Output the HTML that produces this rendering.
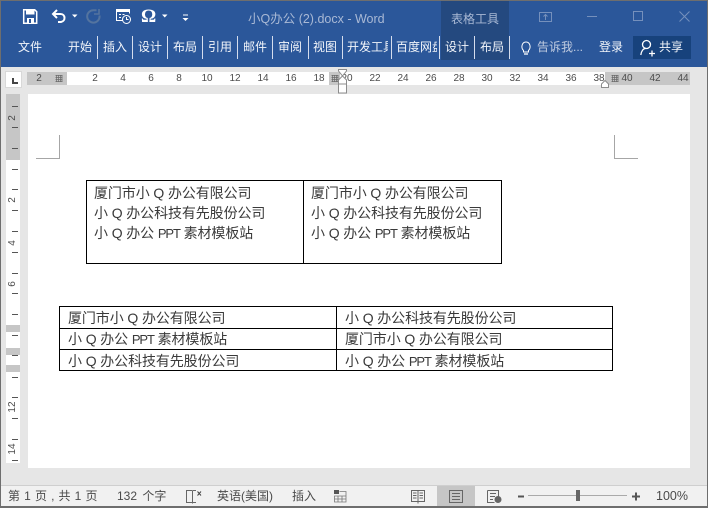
<!DOCTYPE html>
<html lang="zh-CN">
<head>
<meta charset="utf-8">
<style>
html,body{margin:0;padding:0}
body{width:708px;height:508px;overflow:hidden;position:relative;background:#e6e6e6;font-family:"Liberation Sans","Noto Sans CJK SC",sans-serif}
.a{position:absolute;white-space:pre}
.r{position:absolute}
.tab{position:absolute;top:39px;height:16px;line-height:16px;font-size:12px;color:#f2f5fa;white-space:pre;overflow:hidden}
.sep{position:absolute;top:36px;width:1px;height:23px;background:#d5dded}
.hn{position:absolute;top:72px;width:20px;margin-left:-10px;text-align:center;font-size:10px;line-height:13px;color:#4c4c4c}
.vn{position:absolute;left:3px;width:20px;height:12px;text-align:center;font-size:10px;line-height:12px;color:#4c4c4c;transform:rotate(-90deg)}
.t{position:absolute;width:6px;height:1px;left:12px;background:#555}
.d{position:absolute;font-size:14px;line-height:20px;color:#3a3a3a;white-space:pre;letter-spacing:-.1px}
.d span{font-size:13px;letter-spacing:-1.1px}
.s{position:absolute;top:488px;font-size:12px;line-height:16px;color:#4a4a4a;white-space:pre}
svg{position:absolute;overflow:visible}
</style>
</head>
<body>
<!-- ribbon -->
<div class="r" style="left:0;top:0;width:708px;height:67px;background:#2b579a"></div>
<div class="r" style="left:441px;top:1px;width:68px;height:59px;background:#24497f"></div>
<div class="r" style="left:0;top:0;width:708px;height:1px;background:#6e6e6e"></div>

<!-- QAT -->
<svg style="left:0;top:0" width="200" height="30" fill="none">
<path d="M23.700 9.700h11l2 2v11.600h-13z" stroke="#fff" stroke-width="1.500"/>
<path d="M26 9.500h8.500v5H26z" fill="#fff"/>
<path d="M27 18h7v5h-7z" fill="#fff"/><path d="M29 19h2v4h-2z" fill="#2b579a"/>
<path d="M57 10l-4 4 4 4M53.500 14h7c5 0 5.500 7 .5 8h-3" stroke="#fff" stroke-width="2"/>
<path d="M72 14.500h5.500l-2.750 3z" fill="#fff"/>
<path d="M99.500 15.500a6.200 6.200 0 1 1-6-5.300h3" stroke="#54749f" stroke-width="2"/>
<path d="M99 9v5h-5" stroke="#54749f" stroke-width="1.600"/>
<path d="M116 9h14v3h-14z" fill="#fff"/>
<path d="M116.500 9.500h13v4M116.500 9.500v11h6" stroke="#fff"/>
<path d="M119 14.500h2m1.500 0h2M119 17.500h2m1.500 0h2" stroke="#fff"/>
<circle cx="126.500" cy="19.500" r="4" stroke="#fff" fill="#2b579a"/>
<path d="M126.500 17v2.500h2" stroke="#fff"/>
<path d="M162 14.500h5.500l-2.750 3z" fill="#fff"/>
<path d="M183 15h5" stroke="#fff"/><path d="M182.500 18h6l-3 3z" fill="#fff"/>
</svg>
<div class="a" style="left:141px;top:6px;font-family:'Liberation Serif',serif;font-size:19px;line-height:22px;color:#fff;font-weight:bold">Ω</div>

<!-- title -->
<div class="a" style="left:248px;top:11px;font-size:12.500px;line-height:17px;color:#a9b9d5">小Q办公 (2).docx - Word</div>
<div class="a" style="left:451px;top:11px;font-size:12px;line-height:17px;color:#a9b9d5">表格工具</div>

<!-- window controls -->
<svg style="left:530px;top:5px" width="170" height="24" fill="none" stroke="#7590bc">
<path d="M9.500 7.500h12v9h-12z"/><path d="M15.500 15v-5M13.500 11.500l2-2 2 2"/>
<path d="M57 11.500h10"/>
<path d="M103.500 6.500h9v9h-9z"/>
<path d="M149.500 6.500l10 10M159.500 6.500l-10 10"/>
</svg>

<!-- tabs -->
<div class="tab" style="left:18px">文件</div>
<div class="tab" style="left:68px">开始</div><div class="sep" style="left:97px"></div>
<div class="tab" style="left:103px">插入</div><div class="sep" style="left:132px"></div>
<div class="tab" style="left:138px">设计</div><div class="sep" style="left:167px"></div>
<div class="tab" style="left:173px">布局</div><div class="sep" style="left:202px"></div>
<div class="tab" style="left:208px">引用</div><div class="sep" style="left:237px"></div>
<div class="tab" style="left:243px">邮件</div><div class="sep" style="left:272px"></div>
<div class="tab" style="left:278px">审阅</div><div class="sep" style="left:308px"></div>
<div class="tab" style="left:313px">视图</div><div class="sep" style="left:342px"></div>
<div class="tab" style="left:347px;width:41px">开发工具</div><div class="sep" style="left:391px"></div>
<div class="tab" style="left:396px;width:41px">百度网盘</div><div class="sep" style="left:439px"></div>
<div class="tab" style="left:445px">设计</div><div class="sep" style="left:474px"></div>
<div class="tab" style="left:480px">布局</div><div class="sep" style="left:509px"></div>
<svg style="left:520px;top:40px" width="14" height="16" fill="none" stroke="#fff">
<path d="M3.500 10.500c-3-3-1.500-8.500 2.500-8.500s5.500 5.500 2.500 8.500v1.500h-5z"/><path d="M4 14h4" stroke-width="1.300"/>
</svg>
<div class="tab" style="left:537px;color:#c0cce0">告诉我...</div>
<div class="tab" style="left:599px">登录</div>
<div class="r" style="left:633px;top:36px;width:58px;height:23px;background:#17427c"></div>
<svg style="left:640px;top:39px" width="16" height="18" fill="none" stroke="#fff" stroke-width="1.300">
<circle cx="6.500" cy="5.500" r="4"/><path d="M.8 16c.5-4 2.500-6.500 5-6.700M9 14.500h6M12 11.500v6"/>
</svg>
<div class="tab" style="left:659px">共享</div>

<!-- ruler corner -->
<div class="r" style="left:5px;top:71px;width:17px;height:17px;background:#fff;border:1px solid #d8d8d8;box-sizing:border-box"></div>
<div class="r" style="left:12px;top:78px;width:2px;height:6px;background:#444"></div>
<div class="r" style="left:12px;top:82px;width:6px;height:2px;background:#444"></div>

<!-- horizontal ruler -->
<div class="r" style="left:27px;top:72px;width:663px;height:13px;background:#fff"></div>
<div class="r" style="left:27px;top:72px;width:40px;height:13px;background:#c6c6c6"></div>
<div class="r" style="left:329px;top:72px;width:11px;height:13px;background:#c6c6c6"></div>
<div class="r" style="left:605px;top:72px;width:85px;height:13px;background:#c6c6c6"></div>
<div class="hn" style="left:39px">2</div>
<div class="hn" style="left:95px">2</div><div class="hn" style="left:123px">4</div><div class="hn" style="left:151px">6</div><div class="hn" style="left:179px">8</div>
<div class="hn" style="left:207px">10</div><div class="hn" style="left:235px">12</div><div class="hn" style="left:263px">14</div><div class="hn" style="left:291px">16</div><div class="hn" style="left:319px">18</div>
<div class="hn" style="left:347px">20</div><div class="hn" style="left:375px">22</div><div class="hn" style="left:403px">24</div><div class="hn" style="left:431px">26</div><div class="hn" style="left:459px">28</div>
<div class="hn" style="left:487px">30</div><div class="hn" style="left:515px">32</div><div class="hn" style="left:543px">34</div><div class="hn" style="left:571px">36</div><div class="hn" style="left:599px">38</div>
<div class="hn" style="left:627px">40</div><div class="hn" style="left:655px">42</div><div class="hn" style="left:683px">44</div>
<svg style="left:0;top:0" width="708" height="100" fill="none">
<path d="M55.500 75.500h7M55.500 77.500h7M55.500 79.500h7M55.500 81.500h7M56.500 75v7M58.500 75v7M60.500 75v7M62 75v7" stroke="#6a6a6a" stroke-width=".7"/>
<path d="M331.500 75.500h7M331.500 77.500h7M331.500 79.500h7M331.500 81.500h7M332.500 75v7M334.500 75v7M336.500 75v7M338 75v7" stroke="#6a6a6a" stroke-width=".7"/>
<path d="M611.500 75.500h7M611.500 77.500h7M611.500 79.500h7M611.500 81.500h7M612.500 75v7M614.500 75v7M616.500 75v7M618 75v7" stroke="#6a6a6a" stroke-width=".7"/>
<path d="M338.500 69.500h8v1.500l-4 5 4 4v4h-8v-4l4-4-4-5zM338.500 84h8v9h-8z" fill="#fff" stroke="#8c8c8c"/>
<path d="M601.500 87.500v-3.500l3.500-3.500 3.500 3.500v3.500z" fill="#fff" stroke="#8c8c8c"/>
</svg>

<!-- vertical ruler -->
<div class="r" style="left:6px;top:94px;width:14px;height:369px;background:#fff"></div>
<div class="r" style="left:6px;top:94px;width:14px;height:66px;background:#c6c6c6"></div>
<div class="r" style="left:6px;top:325px;width:14px;height:7px;background:#c6c6c6"></div>
<div class="r" style="left:6px;top:348px;width:14px;height:7px;background:#c6c6c6"></div>
<div class="r" style="left:6px;top:365px;width:14px;height:7px;background:#c6c6c6"></div>
<div class="t" style="top:106px"></div><div class="t" style="top:127px"></div><div class="t" style="top:148px"></div><div class="t" style="top:169px"></div><div class="t" style="top:189px"></div><div class="t" style="top:210px"></div><div class="t" style="top:231px"></div><div class="t" style="top:252px"></div><div class="t" style="top:273px"></div><div class="t" style="top:293px"></div><div class="t" style="top:314px"></div><div class="t" style="top:335px"></div><div class="t" style="top:355px"></div><div class="t" style="top:377px"></div><div class="t" style="top:397px"></div><div class="t" style="top:418px"></div><div class="t" style="top:439px"></div><div class="t" style="top:460px"></div>
<div class="vn" style="top:112px">2</div>
<div class="vn" style="top:194px">2</div>
<div class="vn" style="top:237px">4</div>
<div class="vn" style="top:278px">6</div>
<div class="vn" style="top:401px">12</div>
<div class="vn" style="top:443px">14</div>

<!-- page -->
<div class="r" style="left:28px;top:94px;width:662px;height:374px;background:#fff"></div>
<svg style="left:0;top:0" width="708" height="200" fill="none" stroke="#a6a6a6">
<path d="M36 158.500h23.500V135M614.500 135v23.500H638"/>
</svg>

<!-- table 1 -->
<div class="r" style="left:86px;top:180px;width:416px;height:84px;border:1px solid #000;box-sizing:border-box"></div>
<div class="r" style="left:303px;top:180px;width:1px;height:84px;background:#000"></div>
<div class="d" style="left:94px;top:183px">厦门市小 Q 办公有限公司</div>
<div class="d" style="left:94px;top:203px">小 Q 办公科技有先股份公司</div>
<div class="d" style="left:94px;top:223px">小 Q 办公 <span>PPT</span> 素材模板站</div>
<div class="d" style="left:311px;top:183px">厦门市小 Q 办公有限公司</div>
<div class="d" style="left:311px;top:203px">小 Q 办公科技有先股份公司</div>
<div class="d" style="left:311px;top:223px">小 Q 办公 <span>PPT</span> 素材模板站</div>

<!-- table 2 -->
<div class="r" style="left:59px;top:306px;width:554px;height:65px;border:1px solid #000;box-sizing:border-box"></div>
<div class="r" style="left:59px;top:328px;width:554px;height:1px;background:#000"></div>
<div class="r" style="left:59px;top:349px;width:554px;height:1px;background:#000"></div>
<div class="r" style="left:336px;top:306px;width:1px;height:65px;background:#000"></div>
<div class="d" style="left:68px;top:308px">厦门市小 Q 办公有限公司</div>
<div class="d" style="left:68px;top:329px">小 Q 办公 <span>PPT</span> 素材模板站</div>
<div class="d" style="left:68px;top:351px">小 Q 办公科技有先股份公司</div>
<div class="d" style="left:345px;top:308px">小 Q 办公科技有先股份公司</div>
<div class="d" style="left:345px;top:329px">厦门市小 Q 办公有限公司</div>
<div class="d" style="left:345px;top:351px">小 Q 办公 <span>PPT</span> 素材模板站</div>

<!-- status bar -->
<div class="r" style="left:0;top:485px;width:708px;height:1px;background:#cfcfcf"></div>
<div class="r" style="left:0;top:486px;width:708px;height:20px;background:#f1f1f1"></div>
<div class="r" style="left:437px;top:486px;width:38px;height:20px;background:#c6c6c6"></div>
<div class="s" style="left:8px;word-spacing:.8px">第 1 页 , 共 1 页</div>
<div class="s" style="left:117px;word-spacing:2px">132 个字</div>
<div class="s" style="left:217px">英语(美国)</div>
<div class="s" style="left:292px">插入</div>
<div class="s" style="left:656px;font-size:12.500px">100%</div>
<svg style="left:0;top:0" width="708" height="508" fill="none" stroke="#666">
<path d="M192.500 490.500h-6v12h6M192.500 490.500v13M193 490.500h3M193 502.500h3"/>
<path d="M197.500 491.500l3.500 4M201 491.500l-3.500 4" stroke="#444"/>
<path d="M334 490h5v4h-5z" fill="#555" stroke="none"/>
<path d="M339.500 491.500h6.500v10.500h-11.500v-6h11.500M338 496v6M342 496v6M334.500 499h11.500" stroke="#777" stroke-width=".8"/>
<path d="M411.500 490.500h13v11h-13zM418 490.500v13M413 493h3.500M413 495.500h3.500M413 498h3.500M419.500 493h3.500M419.500 495.500h3.500M419.500 498h3.500"/>
<path d="M449.500 490.500h13v12h-13zM452 493.500h8M452 496.500h8M452 499.500h8"/>
<path d="M487.500 490.500h11v7M487.500 490.500v12h7M490 493.500h6M490 496.500h5M490 499.500h3"/>
<circle cx="498" cy="499.500" r="3.500" fill="#666" stroke="none"/>
<path d="M518 496.500h6" stroke="#555" stroke-width="2"/>
<path d="M528 495.500h99" stroke="#aaa"/>
<path d="M576 490h4v11h-4z" fill="#666" stroke="none"/>
<path d="M632 496.500h8M636 492.500v8" stroke="#555" stroke-width="2"/>
</svg>
<div class="r" style="left:0;top:506px;width:708px;height:2px;background:#6e6e6e"></div>
<div class="r" style="left:0;top:0;width:1px;height:508px;background:#6e6e6e"></div>
<div class="r" style="left:707px;top:0;width:1px;height:508px;background:#6e6e6e"></div>
</body>
</html>
